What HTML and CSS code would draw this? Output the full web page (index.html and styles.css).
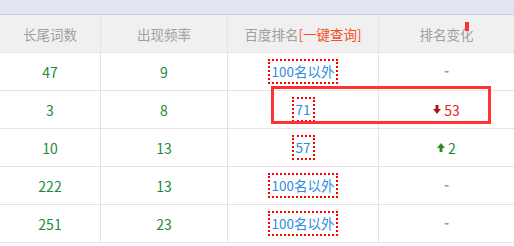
FILE: index.html
```html
<!DOCTYPE html>
<html lang="zh">
<head>
<meta charset="utf-8">
<link rel="stylesheet" href="styles.css">
</head>
<body>
<div class="topbar"></div>
<div class="wrap">
  <div class="grid">
    <div class="cell head">长尾词数</div>
    <div class="cell head">出现频率</div>
    <div class="cell head">百度排名<span class="query">[一键查询]</span></div>
    <div class="cell head last">排名变化</div>

    <div class="cell num">47</div>
    <div class="cell num">9</div>
    <div class="cell"><span class="rank">100名以外</span></div>
    <div class="cell last"><span class="dash">-</span></div>

    <div class="cell num">3</div>
    <div class="cell num">8</div>
    <div class="cell"><span class="rank">71</span></div>
    <div class="cell last"><span class="down"><svg width="8" height="9" viewBox="0 0 8 9"><rect x="2.5" y="0" width="3" height="5" fill="#b01818"/><polygon points="0,4 8,4 4,9" fill="#b01818"/></svg>53</span></div>

    <div class="cell num">10</div>
    <div class="cell num">13</div>
    <div class="cell"><span class="rank">57</span></div>
    <div class="cell last"><span class="up"><svg width="8" height="9" viewBox="0 0 8 9"><polygon points="4,0 8,5 0,5" fill="#2e8b1e"/><rect x="2.5" y="4" width="3" height="5" fill="#2e8b1e"/></svg>2</span></div>

    <div class="cell num">222</div>
    <div class="cell num">13</div>
    <div class="cell"><span class="rank">100名以外</span></div>
    <div class="cell last"><span class="dash">-</span></div>

    <div class="cell num">251</div>
    <div class="cell num">23</div>
    <div class="cell"><span class="rank">100名以外</span></div>
    <div class="cell last"><span class="dash">-</span></div>
  </div>
  <div class="mark"></div>
  <div class="highlight"></div>
</div>
</body>
</html>
```
FILE: styles.css
```css
html, body {
  margin: 0;
  padding: 0;
  background: #fff;
}
body {
  font-family: "Noto Sans CJK SC", "Noto Sans", sans-serif;
  font-size: 13px;
  width: 514px;
  overflow: hidden;
}
.topbar {
  height: 14px;
  background: #e1e5f0;
  border-bottom: 1px solid #c9cee0;
}
.wrap {
  position: relative;
}
.grid {
  display: grid;
  grid-template-columns: 101px 127px 151px 1fr;
  grid-auto-rows: 38px;
}
.cell {
  display: flex;
  align-items: center;
  justify-content: center;
  border-right: 1px solid #e4e4e4;
  border-bottom: 1px solid #e4e4e4;
  box-sizing: border-box;
}
.cell.last {
  border-right: none;
}
.head {
  background: #f0f0f0;
  color: #a0a0a0;
  font-size: 13.5px;
}
.query {
  color: #f4511e;
}
.num {
  color: #1e8a3c;
  font-size: 14px;
}
.rank {
  color: #2b8ce0;
  border: 2px dotted #f00;
  padding: 1px 2px;
  line-height: 19px;
  font-size: 13.5px;
}
.dash {
  color: #999;
  font-size: 14px;
  font-weight: bold;
  line-height: 1;
  margin-top: -4px;
}
.down, .up {
  display: flex;
  align-items: center;
  gap: 3px;
  font-size: 14px;
}
.down {
  color: #f02020;
}
.up {
  color: #1e8a3c;
}
.mark {
  position: absolute;
  left: 465px;
  top: 7px;
  width: 4px;
  height: 9px;
  background: #f33;
}
.highlight {
  position: absolute;
  left: 271px;
  top: 71px;
  width: 220px;
  height: 38px;
  box-sizing: border-box;
  border: 3px solid #f33;
}
```
